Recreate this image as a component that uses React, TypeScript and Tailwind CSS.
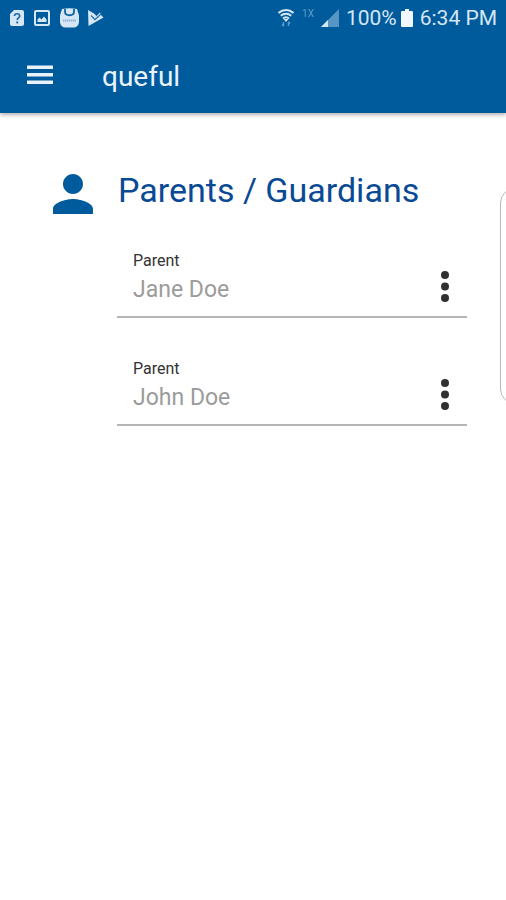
const guardians = [
  { id: 'guardian-1', role: 'Parent', name: 'Jane Doe' },
  { id: 'guardian-2', role: 'Parent', name: 'John Doe' }
];

function StatusBar() {
  return (
    <div className="flex h-9 items-center justify-between pl-[10px] pr-[9px] text-[#d5e6f5]">
      <div className="flex items-center gap-[9px]">
        {/* unknown sim */}
        <svg width="14" height="18" viewBox="0 0 14 18" aria-hidden="true">
          <path
            d="M4 1h8a2 2 0 0 1 2 2v12a2 2 0 0 1-2 2H2a2 2 0 0 1-2-2V5z"
            fill="currentColor"
          />
          <path
            d="M4.500 7c0-3 5.200-3 5.200 0 0 1.900-2.500 1.900-2.500 4"
            fill="none"
            stroke="#1f6ba6"
            strokeWidth="1.700"
          />
          <circle cx="7.200" cy="13.400" r="1.100" fill="#1f6ba6" />
        </svg>
        {/* picture */}
        <svg width="18" height="18" viewBox="0 0 18 18" aria-hidden="true">
          <rect
            x="2"
            y="2"
            width="14"
            height="14"
            rx="1"
            fill="none"
            stroke="currentColor"
            strokeWidth="2"
          />
          <path d="M4.500 13v-2.500l2-2 2 2 2.500-3 2.500 3V13z" fill="currentColor" />
        </svg>
        {/* shopping bag */}
        <svg width="19" height="20" viewBox="0 0 19 20" aria-hidden="true">
          <path
            d="M2 1q7.500-1.500 15 0l2 6.500V14a5.500 5.500 0 0 1-5.500 5.500h-8A5.500 5.500 0 0 1 0 14V7.500z"
            fill="currentColor"
          />
          <path
            d="M5 1v2.500c0 5 9 5 9 0V1"
            fill="none"
            stroke="#0f62a0"
            strokeWidth="1.800"
          />
          <path
            d="M3 12.500h13"
            stroke="#8fb4d6"
            strokeWidth="2"
            strokeDasharray="1.500 0.500"
          />
        </svg>
        {/* play store check */}
        <svg width="16" height="18" viewBox="0 0 16 18" aria-hidden="true">
          <path d="M0 1l6 3.500 2.500 2.500L12 3.500l1 2.500L15.500 8.500 0.500 17z" fill="currentColor" />
          <path
            d="M3 6.500l4 4L13 5"
            fill="none"
            stroke="#2a74ad"
            strokeWidth="1.300"
          />
        </svg>
      </div>
      <div className="flex items-center">
        <svg width="16" height="20" viewBox="0 0 16 20" aria-hidden="true">
          <path
            d="M0.500 5c4.500-4 10.500-4 15 0M2.800 7.800c3-2.700 7.400-2.700 10.400 0M5 10.500c2-1.700 4-1.700 6 0"
            fill="none"
            stroke="currentColor"
            strokeWidth="2"
          />
          <path d="M5.500 11h5L8 14z" fill="currentColor" />
          <path
            d="M5.500 14v4M4 16.500l1.500 1.700M10.500 18v-4M12 15.500l-1.500-1.700"
            fill="none"
            stroke="#5f9cc9"
            strokeWidth="1.400"
          />
        </svg>
        <span className="mb-2 ml-2 text-[10px] leading-3 text-[#5f9cc9]">1X</span>
        <svg
          className="ml-[7px]"
          width="18"
          height="18"
          viewBox="0 0 18 18"
          aria-hidden="true"
        >
          <path d="M0 18L18 0v18z" fill="#5795c4" />
          <path d="M0 18l7-7v7z" fill="currentColor" />
        </svg>
        <span className="ml-[7px] text-[21px] leading-6">100%</span>
        <svg
          className="mx-1"
          width="12"
          height="18"
          viewBox="0 0 12 18"
          aria-hidden="true"
        >
          <path
            d="M4 0h4v2h3a1 1 0 0 1 1 1v14a1 1 0 0 1-1 1H1a1 1 0 0 1-1-1V3a1 1 0 0 1 1-1h3z"
            fill="#f1f7fd"
          />
        </svg>
        <span className="ml-[3px] text-[21px] leading-6">6:34 PM</span>
      </div>
    </div>
  );
}

function GuardianRow({ id, role, name }: { id: string; role: string; name: string }) {
  return (
    <li className="flex items-end border-b-2 border-[#b5b5b5]">
      <div className="flex min-w-0 flex-1 flex-col pb-[9px] pl-4">
        <label htmlFor={id} className="text-base leading-5 text-[#333333]">
          {role}
        </label>
        <input
          id={id}
          type="text"
          defaultValue={name}
          className="h-9 w-full bg-transparent text-[23px] text-[#9b9b9b] outline-none"
        />
      </div>
      <button
        type="button"
        aria-label={`Options for ${name}`}
        className="flex h-15 w-11 items-center justify-center text-[#303030]"
      >
        <svg width="8" height="32" viewBox="0 0 8 32" fill="currentColor" aria-hidden="true">
          <circle cx="4" cy="5" r="4" />
          <circle cx="4" cy="16.500" r="4" />
          <circle cx="4" cy="28" r="4" />
        </svg>
      </button>
    </li>
  );
}

export default function App() {
  return (
    <div className="relative min-h-screen overflow-hidden bg-white font-[Roboto,sans-serif]">
      <header className="bg-[#005b9c] shadow-[0_2px_4px_rgba(0,0,0,0.3)]">
        <StatusBar />
        <div className="flex h-[77px] items-center pl-[27px] text-[#eaf3fc]">
          <button type="button" aria-label="Open menu">
            <svg width="26" height="20" viewBox="0 0 26 20" fill="currentColor" aria-hidden="true">
              <path d="M0 0.500h26v3.500H0zM0 8h26v3.500H0zM0 15.500h26V19H0z" />
            </svg>
          </button>
          <h1 className="ml-[49px] pt-1 text-[28px] leading-8">queful</h1>
        </div>
      </header>

      <main className="pt-[57px] pr-[39px] pl-[53px]">
        <div className="flex items-start gap-[25px]">
          <svg
            className="mt-1 shrink-0 text-[#005b9c]"
            width="40"
            height="40"
            viewBox="4 4 16 16"
            fill="currentColor"
            aria-hidden="true"
          >
            <path d="M12 12c2.210 0 4-1.790 4-4s-1.790-4-4-4-4 1.790-4 4 1.790 4 4 4zm0 2c-2.670 0-8 1.340-8 4v2h16v-2c0-2.660-5.330-4-8-4z" />
          </svg>
          <h2 className="text-[34px] leading-10 text-[#0a4a94]">Parents / Guardians</h2>
        </div>
        <ul className="mt-[37px] flex flex-col gap-[41px] pl-16">
          {guardians.map((guardian) => (
            <GuardianRow key={guardian.id} {...guardian} />
          ))}
        </ul>
      </main>

      {/* edge panel handle, runs off the right side */}
      <div className="absolute top-[188px] -right-6 h-[216px] w-[30px] rounded-[20px] border border-[#b8b8b8] bg-white" />
    </div>
  );
}
